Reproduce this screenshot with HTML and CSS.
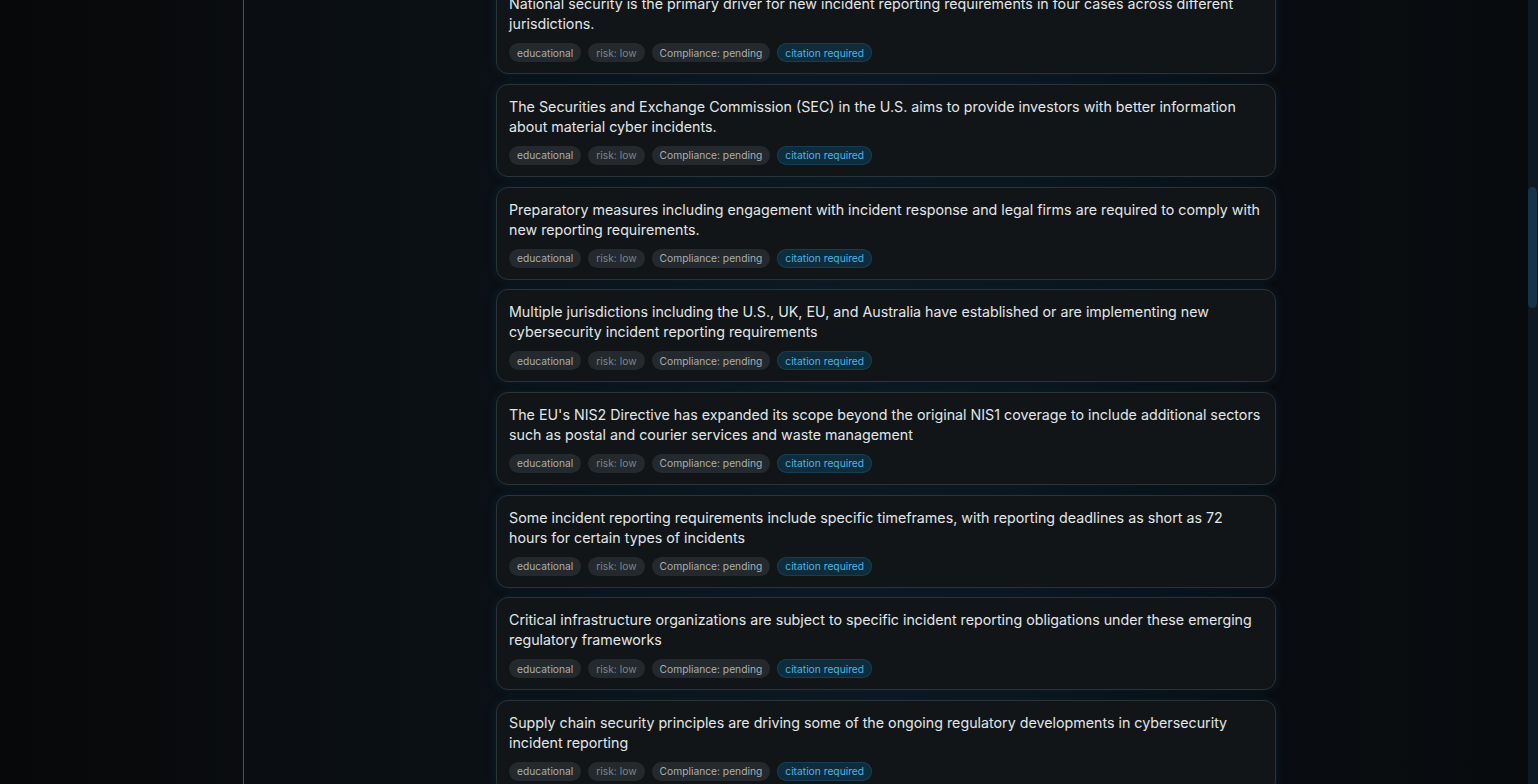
FILE: index.html
```html
<!DOCTYPE html>
<html lang="en">
<head>
<meta charset="utf-8">
<title>Claims</title>
<link rel="stylesheet" href="styles.css">
</head>
<body>
<div class="app">
  <aside class="sidebar"></aside>
  <main class="main">
    <div class="list">
      <article class="card">
        <p class="claim">National security is the primary driver for new incident reporting requirements in four cases across different jurisdictions.</p>
        <div class="tags"><span class="tag">educational</span><span class="tag dim">risk: low</span><span class="tag">Compliance: pending</span><span class="tag cite">citation required</span></div>
      </article>
      <article class="card">
        <p class="claim">The Securities and Exchange Commission (SEC) in the U.S. aims to provide investors with better information about material cyber incidents.</p>
        <div class="tags"><span class="tag">educational</span><span class="tag dim">risk: low</span><span class="tag">Compliance: pending</span><span class="tag cite">citation required</span></div>
      </article>
      <article class="card">
        <p class="claim">Preparatory measures including engagement with incident response and legal firms are required to comply with new reporting requirements.</p>
        <div class="tags"><span class="tag">educational</span><span class="tag dim">risk: low</span><span class="tag">Compliance: pending</span><span class="tag cite">citation required</span></div>
      </article>
      <article class="card">
        <p class="claim">Multiple jurisdictions including the U.S., UK, EU, and Australia have established or are implementing new cybersecurity incident reporting requirements</p>
        <div class="tags"><span class="tag">educational</span><span class="tag dim">risk: low</span><span class="tag">Compliance: pending</span><span class="tag cite">citation required</span></div>
      </article>
      <article class="card">
        <p class="claim">The EU's NIS2 Directive has expanded its scope beyond the original NIS1 coverage to include additional sectors such as postal and courier services and waste management</p>
        <div class="tags"><span class="tag">educational</span><span class="tag dim">risk: low</span><span class="tag">Compliance: pending</span><span class="tag cite">citation required</span></div>
      </article>
      <article class="card">
        <p class="claim">Some incident reporting requirements include specific timeframes, with reporting deadlines as short as 72 hours for certain types of incidents</p>
        <div class="tags"><span class="tag">educational</span><span class="tag dim">risk: low</span><span class="tag">Compliance: pending</span><span class="tag cite">citation required</span></div>
      </article>
      <article class="card">
        <p class="claim">Critical infrastructure organizations are subject to specific incident reporting obligations under these emerging regulatory frameworks</p>
        <div class="tags"><span class="tag">educational</span><span class="tag dim">risk: low</span><span class="tag">Compliance: pending</span><span class="tag cite">citation required</span></div>
      </article>
      <article class="card">
        <p class="claim">Supply chain security principles are driving some of the ongoing regulatory developments in cybersecurity incident reporting</p>
        <div class="tags"><span class="tag">educational</span><span class="tag dim">risk: low</span><span class="tag">Compliance: pending</span><span class="tag cite">citation required</span></div>
      </article>
    </div>
  </main>
  <div class="scrollbar"><div class="thumb"></div></div>
</div>
</body>
</html>
```

FILE: styles.css
```css
* { box-sizing: border-box; }
html, body {
  margin: 0;
  height: 100%;
  background: #07090b;
  font-family: Inter, "Noto Sans", sans-serif;
  overflow: hidden;
}
.app {
  display: flex;
  height: 784px;
}
.sidebar {
  width: 244px;
  flex: none;
  background: linear-gradient(90deg, #060809 0%, #080a0c 60%, #0a0d10 100%);
  border-right: 1px solid #4a5056;
}
.main {
  flex: 1;
  overflow: hidden;
  background:
    linear-gradient(90deg, #0a0e12 0%, #0b1116 25%, #0c161d 45%, #0b141b 60%, #090d11 80%, #080b0e 100%);
  display: flex;
  justify-content: center;
}
.list {
  width: 780px;
  margin-top: -18.67px;
  display: flex;
  flex-direction: column;
  gap: 9.67px;
}
.card {
  flex: none;
  border: 1px solid #2a3338;
  border-radius: 12px;
  background: #111518;
  padding: 12px 12px 11px;
  box-shadow: 0 0 10px rgba(18, 70, 100, 0.28);
  display: flex;
  flex-direction: column;
  gap: 9px;
}
.claim {
  margin: 0;
  font-size: 14.25px;
  line-height: 20px;
  color: #e2e5e8;
}
.tags {
  display: flex;
  gap: 7px;
}
.tag {
  display: inline-flex;
  align-items: center;
  height: 19px;
  padding: 0 8px;
  border-radius: 10px;
  background: #23292d;
  color: #a8aeb3;
  font-size: 10.25px;
  line-height: 1;
}
.tag.dim {
  color: #7b858c;
}
.tag.cite {
  background: #0e2c3c;
  color: #4db3e2;
  box-shadow: inset 0 0 0 1px #163e52;
}
.scrollbar {
  width: 10px;
  flex: none;
  background: #0d1a23;
  padding-top: 187px;
}
.thumb {
  width: 9px;
  height: 121px;
  border-radius: 5px;
  background: #153449;
}
```
